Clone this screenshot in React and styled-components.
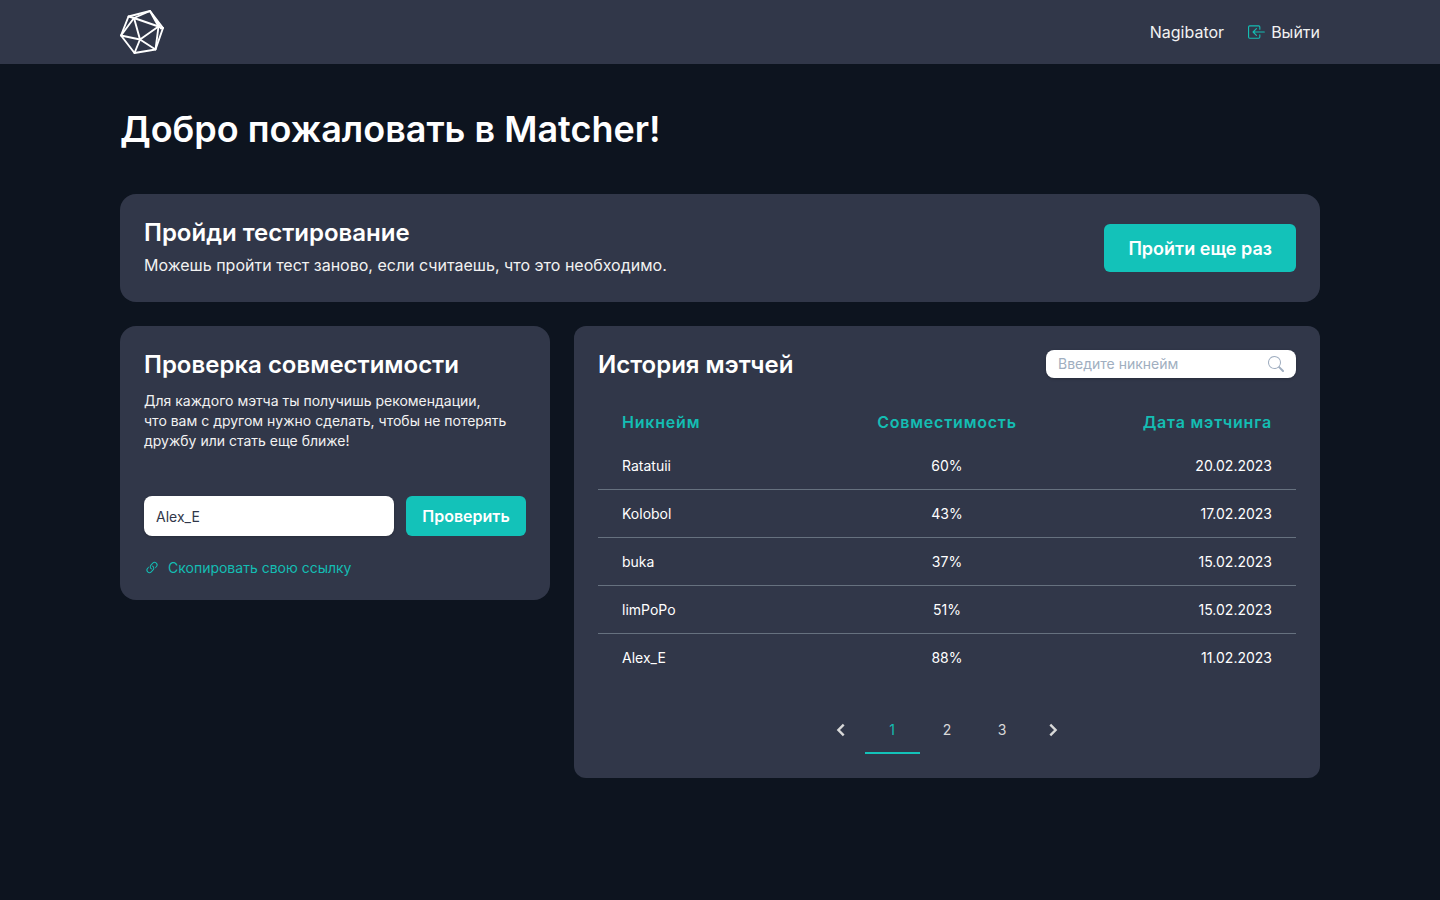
import React, { useState } from "react";
import styled, { createGlobalStyle, ThemeProvider } from "styled-components";
import { BsBoxArrowInLeft, BsSearch, BsLink45Deg } from "react-icons/bs";

const theme = {
  page: "#0d141f",
  card: "#313749",
  accent: "#13c2b9",
  accentText: "#14bdb3",
  text: "#ffffff",
  soft: "#f2f2f2",
  muted: "#d9d9d9",
  line: "#66717f",
  placeholder: "#a0aec0",
  field: "#313749",
};

const GlobalStyle = createGlobalStyle`
  *, *::before, *::after { box-sizing: border-box; }
  body {
    margin: 0;
    background: ${theme.page};
    color: ${theme.text};
    font-family: Inter, "Liberation Sans", sans-serif;
    font-size: 16px;
    line-height: 24px;
  }
  h1, h2, p { margin: 0; }
  button, input { font-family: inherit; }
`;

const Page = styled.div`
  min-height: 100vh;
`;

const Container = styled.div`
  width: 100%;
  max-width: 1248px;
  margin: 0 auto;
  padding: 0 24px;
`;

const Header = styled.header`
  background: ${(p) => p.theme.card};
`;

const HeaderRow = styled(Container)`
  display: flex;
  align-items: center;
  justify-content: space-between;
  min-height: 64px;
`;

const HomeLink = styled.a`
  display: flex;
  color: inherit;
`;

const UserNav = styled.nav`
  display: flex;
  align-items: center;
  gap: 24px;
`;

const NavLink = styled.a`
  display: flex;
  align-items: center;
  gap: 5px;
  color: ${(p) => p.theme.soft};
  text-decoration: none;
  svg { color: ${(p) => p.theme.accentText}; }
`;

const Main = styled(Container).attrs({ as: "main" })`
  display: flex;
  flex-direction: column;
  gap: 24px;
  padding-top: 42px;
  padding-bottom: 24px;
`;

const Title = styled.h1`
  padding-bottom: 18px;
  font-size: 36px;
  line-height: 46px;
  font-weight: 600;
`;

const Columns = styled.div`
  display: grid;
  grid-template-columns: minmax(0, 430fr) minmax(0, 746fr);
  align-items: start;
  gap: 24px;
`;

const Card = styled.section`
  padding: 24px;
  border-radius: ${(p) => p.$radius || 16}px;
  background: ${(p) => p.theme.card};
`;

const SplitRow = styled.div`
  display: flex;
  align-items: center;
  justify-content: space-between;
  gap: 24px;
`;

const CardTitle = styled.h2`
  font-size: 24px;
  line-height: 30px;
  font-weight: 600;
`;

const Lead = styled.p`
  padding: 6px 0 2px;
  line-height: 22px;
  color: ${(p) => p.theme.soft};
`;

const Description = styled.p`
  padding-top: 11px;
  font-size: 14px;
  line-height: 20px;
  color: ${(p) => p.theme.soft};
`;

const Button = styled.button`
  flex: ${(p) => (p.$large ? "none" : "1 0 auto")};
  height: ${(p) => (p.$large ? 48 : 40)}px;
  padding: 0 ${(p) => (p.$large ? 24 : 16)}px;
  border: 0;
  border-radius: 6px;
  background: ${(p) => p.theme.accent};
  color: ${(p) => p.theme.text};
  font-size: ${(p) => (p.$large ? 18 : 16)}px;
  font-weight: 600;
  cursor: pointer;
`;

const CheckForm = styled.form`
  display: flex;
  gap: 12px;
  margin: 45px 0 24px;
`;

const TextField = styled.input`
  flex: 0 1 250px;
  min-width: 0;
  height: 40px;
  padding: 0 12px;
  border: 0;
  border-radius: 8px;
  background: #ffffff;
  box-shadow: 0 1px 3px rgba(0, 0, 0, 0.2);
  color: ${(p) => p.theme.field};
  font-size: 14px;
`;

const CopyLink = styled.a`
  display: flex;
  align-items: center;
  gap: 8px;
  font-size: 14px;
  line-height: 16px;
  color: ${(p) => p.theme.accentText};
  text-decoration: none;
`;

const SearchBox = styled.label`
  display: flex;
  align-items: center;
  gap: 8px;
  width: 250px;
  height: 28px;
  padding: 0 12px;
  border-radius: 8px;
  background: #ffffff;
  box-shadow: 0 1px 3px rgba(0, 0, 0, 0.2);
  color: ${(p) => p.theme.placeholder};
`;

const SearchInput = styled.input`
  flex: 1;
  min-width: 0;
  padding: 0;
  border: 0;
  outline: 0;
  background: transparent;
  color: ${(p) => p.theme.field};
  font-size: 14px;
  line-height: 20px;
  &::placeholder { color: ${(p) => p.theme.placeholder}; }
`;

const HistoryHead = styled(SplitRow)`
  align-items: flex-start;
`;

const Table = styled.table`
  width: 100%;
  margin: 22px 0 24px;
  border-collapse: separate;
  border-spacing: 0;
`;

const HeadCell = styled.th`
  width: ${(p) => p.$width};
  height: 40px;
  padding: 0 24px;
  color: ${(p) => p.theme.accentText};
  font-weight: 600;
  letter-spacing: 0.05em;
  text-align: ${(p) => p.$align};
`;

const Cell = styled.td`
  height: 48px;
  padding: 0 24px;
  border-bottom: ${(p) => (p.$last ? 0 : 1)}px solid ${(p) => p.theme.line};
  font-size: 14px;
  line-height: 20px;
  text-align: ${(p) => p.$align};
`;

const Pagination = styled.nav`
  display: flex;
  align-items: center;
  justify-content: center;
  gap: 12px;
`;

const Pages = styled.div`
  display: flex;
`;

const ArrowButton = styled.button`
  display: flex;
  padding: 0;
  border: 0;
  background: none;
  color: ${(p) => p.theme.muted};
  cursor: pointer;
`;

const PageButton = styled.button`
  width: 55px;
  height: 48px;
  padding: 0 0 2px;
  border: 0;
  background: none;
  box-shadow: ${(p) => (p.$active ? `inset 0 -2px ${p.theme.accent}` : "none")};
  color: ${(p) => (p.$active ? p.theme.accentText : p.theme.muted)};
  font-size: 14px;
  cursor: pointer;
`;

const columns = [
  { key: "nick", label: "Никнейм", align: "left", width: "33%" },
  { key: "score", label: "Совместимость", align: "center", width: "34%" },
  { key: "date", label: "Дата мэтчинга", align: "right", width: "33%" },
];

const matches = [
  { nick: "Ratatuii", score: "60%", date: "20.02.2023" },
  { nick: "Kolobol", score: "43%", date: "17.02.2023" },
  { nick: "buka", score: "37%", date: "15.02.2023" },
  { nick: "limPoPo", score: "51%", date: "15.02.2023" },
  { nick: "Alex_E", score: "88%", date: "11.02.2023" },
];

function Logo() {
  return (
    <svg width="44" height="44" viewBox="0 0 44 44" fill="none" stroke="currentColor" strokeWidth="1.9" strokeLinejoin="round" strokeLinecap="round" aria-hidden="true">
      <path d="M30 1 43 18 35.5 39.5 14.500 43 1 25.500 8.500 6.500Z" />
      <path d="M14 8 38.500 16.500 20 29.500Z" />
      <path d="M8.500 6.500 14 8 30 1 38.500 16.500 43 18M14 8 1 25.500 20 29.500 14.500 43M20 29.500 35.500 39.500 38.500 16.500M30 1 41 18.500" />
    </svg>
  );
}

function Chevron({ d }) {
  return (
    <svg width="24" height="24" viewBox="0 0 24 24" fill="none" stroke="currentColor" strokeWidth="2.4" aria-hidden="true">
      <path d={d} />
    </svg>
  );
}

export default function App() {
  const [page, setPage] = useState(1);
  const [nick, setNick] = useState("Alex_E");
  return (
    <ThemeProvider theme={theme}>
      <GlobalStyle />
      <Page>
        <Header>
          <HeaderRow>
            <HomeLink href="#" aria-label="Matcher">
              <Logo />
            </HomeLink>
            <UserNav>
              <NavLink href="#profile">Nagibator</NavLink>
              <NavLink href="#logout">
                <BsBoxArrowInLeft size={18} />
                Выйти
              </NavLink>
            </UserNav>
          </HeaderRow>
        </Header>
        <Main>
          <Title>Добро пожаловать в Matcher!</Title>
          <Card>
            <SplitRow>
              <div>
                <CardTitle>Пройди тестирование</CardTitle>
                <Lead>Можешь пройти тест заново, если считаешь, что это необходимо.</Lead>
              </div>
              <Button type="button" $large>Пройти еще раз</Button>
            </SplitRow>
          </Card>
          <Columns>
            <Card>
              <CardTitle>Проверка совместимости</CardTitle>
              <Description>
                Для каждого мэтча ты получишь рекомендации,
                <br />
                что вам с другом нужно сделать, чтобы не потерять дружбу или стать еще ближе!
              </Description>
              <CheckForm onSubmit={(e) => e.preventDefault()}>
                <TextField aria-label="Никнейм друга" value={nick} onChange={(e) => setNick(e.target.value)} />
                <Button type="submit">Проверить</Button>
              </CheckForm>
              <CopyLink href="#link">
                <BsLink45Deg size={16} />
                Скопировать свою ссылку
              </CopyLink>
            </Card>
            <Card $radius={12}>
              <HistoryHead>
                <CardTitle>История мэтчей</CardTitle>
                <SearchBox>
                  <SearchInput type="text" placeholder="Введите никнейм" aria-label="Введите никнейм" />
                  <BsSearch size={16} />
                </SearchBox>
              </HistoryHead>
              <Table>
                <thead>
                  <tr>
                    {columns.map((c) => (
                      <HeadCell key={c.key} scope="col" $align={c.align} $width={c.width}>{c.label}</HeadCell>
                    ))}
                  </tr>
                </thead>
                <tbody>
                  {matches.map((m, i) => (
                    <tr key={m.nick}>
                      {columns.map((c) => (
                        <Cell key={c.key} $align={c.align} $last={i === matches.length - 1}>{m[c.key]}</Cell>
                      ))}
                    </tr>
                  ))}
                </tbody>
              </Table>
              <Pagination aria-label="Страницы">
                <ArrowButton type="button" aria-label="Назад" onClick={() => setPage(Math.max(1, page - 1))}>
                  <Chevron d="M14.700 6.700 9.400 12 14.700 17.300" />
                </ArrowButton>
                <Pages>
                  {[1, 2, 3].map((n) => (
                    <PageButton key={n} type="button" $active={n === page} onClick={() => setPage(n)}>{n}</PageButton>
                  ))}
                </Pages>
                <ArrowButton type="button" aria-label="Вперёд" onClick={() => setPage(Math.min(3, page + 1))}>
                  <Chevron d="M8.300 6.700 13.600 12 8.300 17.300" />
                </ArrowButton>
              </Pagination>
            </Card>
          </Columns>
        </Main>
      </Page>
    </ThemeProvider>
  );
}
